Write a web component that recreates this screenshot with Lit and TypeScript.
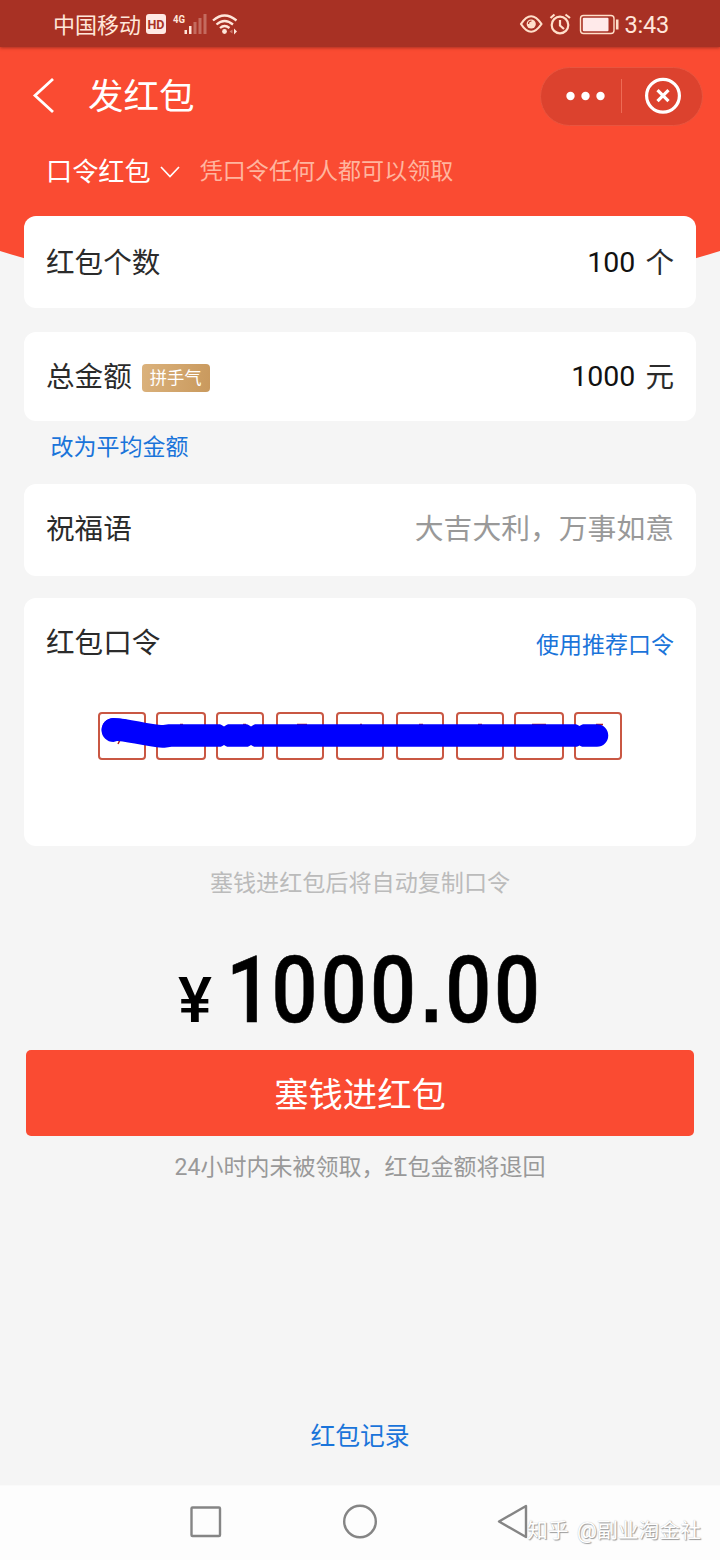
import { LitElement, html, svg, css } from "lit";
import { customElement, property } from "lit/decorators.js";

const fontStack = css`Roboto, "Noto Sans CJK SC", sans-serif`;

@customElement("status-bar")
class StatusBar extends LitElement {
  static styles = css`
    :host { display: flex; height: 47px; padding: 0 52px 0 53px; box-sizing: border-box; align-items: center;
      justify-content: space-between; background: #a83124; color: #ffe6da; font-family: ${fontStack};
      box-shadow: 0 1px 3px #a83124; position: relative; }
    .carrier { display: flex; align-items: center; font-size: 22px; line-height: 47px; height: 47px; }
    .carrier span { padding-top: 4px; }
    .right { display: flex; align-items: center; height: 47px; }
    .time { font-size: 23.5px; line-height: 51px; margin-left: 4px; letter-spacing: -0.2px; padding-top: 3px; }
    svg { display: block; }
    .hd { font: 700 12px Roboto, sans-serif; fill: #a83124; }
    .net { font: 700 11px Roboto, sans-serif; fill: #ffe6da; }
  `;
  render() {
    return html`
      <div class="carrier">
        <span>中国移动</span>
        <svg width="100" height="47" viewBox="141 0 100 47">
          <rect x="146" y="14" width="20" height="20" rx="3" fill="#ffe9e4" />
          <text class="hd" x="147.5" y="28.5" textLength="17" lengthAdjust="spacingAndGlyphs">HD</text>
          <text class="net" x="173" y="23" textLength="12" lengthAdjust="spacingAndGlyphs">4G</text>
          <g fill="#ffe6da">
            <rect x="184.5" y="30" width="2.5" height="4" />
            <rect x="189" y="26" width="2.5" height="8" />
            <g opacity=".32">
              <rect x="193.5" y="22" width="3" height="12" />
              <rect x="198.5" y="18" width="3" height="16" />
              <rect x="203.5" y="14" width="3" height="20" />
            </g>
            <circle cx="224.5" cy="31.5" r="2.4" />
            <path d="M234 28.5v6l3-3z" /><path d="M232.5 29.5v4l-3-2z" opacity=".4" />
          </g>
          <g fill="none" stroke="#ffe6da" stroke-width="2.3">
            <path d="M213 20.5Q224.500 10.500 236.500 20.500" />
            <path d="M216.500 24.500Q224.500 17.500 233 24.500" />
            <path d="M220 28Q224.500 24 229.500 28" />
          </g>
        </svg>
      </div>
      <div class="right">
        <svg width="102" height="47" viewBox="518.500 0 102 47" fill="none" stroke="#ffdfca" stroke-width="2.2">
          <path d="M521.500 24Q531.500 8.500 542 24Q531.500 39.500 521.500 24Z" stroke-linejoin="round" />
          <circle cx="531.700" cy="24" r="4.600" fill="#ffdfca" stroke="none" />
          <path d="M529 24a3 3 0 0 1 3-3" stroke="#a83124" stroke-width="1.200" />
          <circle cx="560.500" cy="25" r="8.300" />
          <path d="M560.500 20v5.500l4 3.500M551 18l4-3.500M566 14.500l4.500 3.500" />
          <rect x="581" y="15.500" width="33.500" height="18" rx="3" stroke-width="1.400" />
          <rect x="583.300" y="17.800" width="25.700" height="13.400" rx="1" fill="#ffeaea" stroke="none" />
          <path d="M617.700 19.500v10" stroke-width="2.600" />
        </svg>
        <span class="time">3:43</span>
      </div>`;
  }
}

@customElement("form-card")
class FormCard extends LitElement {
  @property() label = "";
  static styles = css`
    :host { display: block; background: #fff; border-radius: 12px; padding: 0 22px; box-sizing: border-box;
      font-family: ${fontStack}; color: #2b2b2b; font-size: 28.600px; }
    .row { display: flex; align-items: center; justify-content: space-between; height: 90px; }
    .label { display: flex; align-items: center; line-height: 40px; white-space: nowrap; }
  `;
  render() {
    return html`
      <div class="row">
        <div class="label">${this.label}<slot name="tag"></slot></div>
        <slot name="value"></slot>
      </div>
      <slot></slot>`;
  }
}

@customElement("app-root")
class AppRoot extends LitElement {
  static styles = css`
    :host { display: flex; flex-direction: column; position: relative; width: 720px; height: 1560px; overflow: hidden;
      background: #f5f5f5; font-family: ${fontStack}; box-sizing: border-box; }
    status-bar { padding-right: 51px; }
    svg { display: block; flex: none; }
    .backdrop { position: absolute; left: 0; top: 0; }
    .nav { position: relative; display: flex; align-items: center; height: 98px; padding: 0 17px 0 30px; color: #fff; }
    .title { font-size: 35.500px; line-height: 50px; margin-left: 30px; flex: 1; padding-top: 2px; }
    .capsule { box-sizing: border-box; width: 163px; height: 59px; border-radius: 30px; background: #dc422e;
      border: 1px solid #e9553f; }
    .mode { position: relative; display: flex; align-items: center; height: 50px; padding-left: 46px; color: #fff;
      font-size: 26.200px; line-height: 50px; }
    .mode span { padding-top: 4px; }
    .mode svg { margin: 3px 20px 0 9px; }
    .mode .hint { font-size: 23.050px; color: #ffb59f; }
    .form { position: relative; display: flex; flex-direction: column; padding: 21px 24px 0; }
    .count { height: 92px; padding-top: 2px; margin-bottom: 24px; }
    .total { height: 89px; }
    .wish { height: 92px; }
    .code { height: 248px; margin-top: 22px; }
    .num { font-size: 28.500px; line-height: 40px; color: #111; white-space: pre; display: flex; }
    .num .unit { margin-left: 10px; font-size: 28.600px; color: #2b2b2b; }
    .num b { font-weight: 400; font-size: 28.500px; }
    .tag { background: linear-gradient(100deg, #dbb27c, #c9995d); color: #fff; border-radius: 4px; font-size: 17.300px;
      line-height: 29px; height: 28px; padding: 0 8px; margin: 2px 0 0 10px; }
    .link { color: #1a74da; font-size: 23px; line-height: 34px; }
    .avg { margin: 10px 0 19px 26.500px; }
    .code .link { padding-top: 6px; }
    .placeholder { color: #999; font-size: 28.800px; line-height: 40px; padding-bottom: 1px; }
    .codes { margin: 10px 0 0 42px; }
    .copy { text-align: center; font-size: 23.100px; line-height: 34px; color: #bbb; margin-top: 21px; }
    .amount { margin: 43px auto 0 176px; overflow: visible; }
    .big { font: 500 92px Roboto, sans-serif; stroke: #000; stroke-width: .6px; }
    .dot { font: 700 84px "Liberation Sans", sans-serif; }
    .yen { font: 500 63px Roboto, sans-serif; }
    .pay { margin: 20px 26px 0; height: 86px; line-height: 91px; border-radius: 5px; background: #fa4b32; color: #fff;
      text-align: center; font-size: 34.300px; }
    .refund { text-align: center; font-size: 23px; line-height: 34px; margin-top: 15px; color: #999; }
    .record { text-align: center; font-size: 24.800px; line-height: 36px; margin-top: auto; padding-bottom: 30px; }
    .sysnav { background: #fdfdfd; height: 75px; flex: none; border-top: 1px solid #fafafa; box-sizing: border-box; }
    .mark { position: absolute; left: 527px; top: 1515px; font-size: 20.800px; line-height: 30px; color: #fff;
      white-space: nowrap; word-spacing: 3px; text-shadow: 1px 1px 1px #999, 0 0 1px #bbb; }
    .at { font-size: 22.500px; }
  `;

  render() {
    const boxes = [98, 156, 216, 276, 336, 396, 456, 514, 574];
    const widths = [46, 48, 46, 46, 46, 46, 46, 48, 46];
    return html`
      <svg class="backdrop" width="720" height="310" viewBox="0 0 720 310">
        <path d="M0 0H720V251Q360 363 0 251Z" fill="#fa4b32" />
      </svg>
      <status-bar></status-bar>
      <div class="nav">
        <svg width="28" height="40" viewBox="30 76 28 40" fill="none" stroke="#fff" stroke-width="2.800">
          <path d="M53 79L35 95.500L53 112" />
        </svg>
        <div class="title">发红包</div>
        <div class="capsule">
          <svg width="161" height="57" viewBox="541 68 161 57" fill="#fff">
            <circle cx="570.500" cy="96" r="4.200" /><circle cx="585.500" cy="96" r="4.200" /><circle cx="600.500" cy="96" r="4.200" />
            <path d="M621.500 79v34" stroke="#ee6b55" />
            <circle cx="663" cy="95.700" r="16.400" fill="none" stroke="#fff" stroke-width="3.200" />
            <path d="M657.500 90.200l11 11m0-11l-11 11" stroke="#fff" stroke-width="3.200" />
          </svg>
        </div>
      </div>
      <div class="mode">
        <span>口令红包</span>
        <svg width="20" height="14" viewBox="0 0 20 14" fill="none" stroke="#fff" stroke-width="1.700"><path d="M1 2L10 11.500L19 2" /></svg>
        <span class="hint">凭口令任何人都可以领取</span>
      </div>
      <div class="form">
        <form-card class="count" label="红包个数">
          <div slot="value" class="num"><b>100</b><span class="unit">个</span></div>
        </form-card>
        <form-card class="total" label="总金额">
          <span slot="tag" class="tag">拼手气</span>
          <div slot="value" class="num"><b>1000</b><span class="unit">元</span></div>
        </form-card>
        <div class="link avg">改为平均金额</div>
        <form-card class="wish" label="祝福语">
          <span slot="value" class="placeholder">大吉大利，万事如意</span>
        </form-card>
        <form-card class="code" label="红包口令">
          <span slot="value" class="link">使用推荐口令</span>
          <svg class="codes" width="544" height="74" viewBox="88 698 544 74">
            ${boxes.map((x, i) => svg`<rect x=${x + 1} y="713" width=${widths[i]} height="46" rx="3" fill="none" stroke="#c95743" stroke-width="2" />`)}
            <path d="M118 744l2-4M180 724.500h3M243 724.500h3M297 724.500h10M360 724.500h2M419 724.500h4M478 724.500h4M532 724.500h14M596 724.500h7" stroke="#a22" stroke-width="1.500" />
            <path d="M113 729.500C128 729 143 735.500 163 736.500L170 735.500H597" fill="none" stroke="#0000fe" stroke-width="22.500" stroke-linecap="round" stroke-linejoin="round" />
            <path d="M101.500 730a12 12 0 0 1 12-12q6 0 14 2v18l-14 4a12 12 0 0 1-12-12z" fill="#0000fe" />
            <path d="M220 724l4 2.500 4-2.500zM220 747.500l4-2.500 4 2.500zM247 724l4 2.500 4-2.500zM247 747.500l4-2.500 4 2.500zM576 724l3.500 2 3.500-2zM576 747.500l3.500-2 3.500 2z" fill="#fff" />
          </svg>
        </form-card>
      </div>
      <div class="copy">塞钱进红包后将自动复制口令</div>
      <svg class="amount" width="370" height="86" viewBox="176 944 370 86">
        <text class="yen" x="178" y="1022" textLength="34" lengthAdjust="spacingAndGlyphs">¥</text>
        <text class="big" y="1022" transform="scale(.88 1)" x="257 308.500 364.500 420.500 478.500 506 561.500">1000<tspan class="dot">.</tspan>00</text>
      </svg>
      <div class="pay">塞钱进红包</div>
      <div class="refund">24小时内未被领取，红包金额将退回</div>
      <div class="link record">红包记录</div>
      <div class="sysnav">
        <svg width="720" height="74" viewBox="0 1486 720 74" fill="none" stroke="#858585" stroke-width="2.400" stroke-linejoin="round">
          <rect x="191.500" y="1507.500" width="28.500" height="28.500" rx="1" />
          <circle cx="360" cy="1521.500" r="15.800" />
          <path d="M526 1506V1537L499 1521.500Z" />
        </svg>
      </div>
      <div class="mark">知乎 <span class="at">@</span>副业淘金社</div>`;
  }
}
